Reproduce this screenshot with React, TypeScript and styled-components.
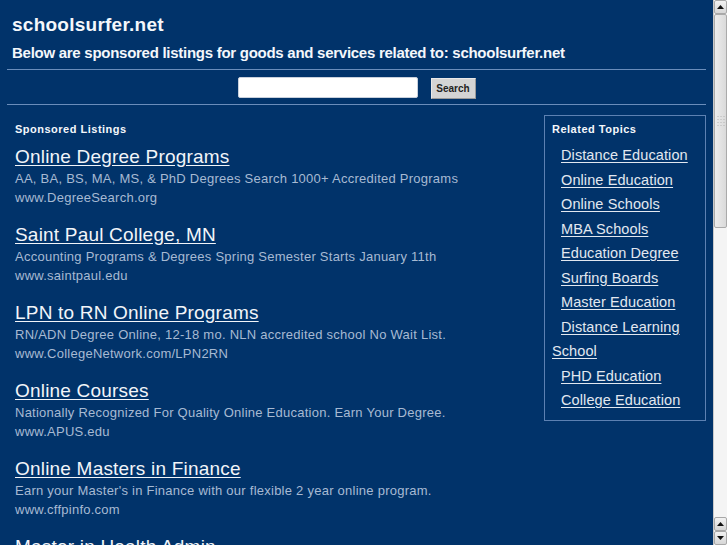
import React from "react";
import styled, { createGlobalStyle } from "styled-components";

const Global = createGlobalStyle`
  html, body { margin: 0; padding: 0; overflow: hidden; background: #003366; }
  body { font-family: "Liberation Sans", Arial, sans-serif; }
`;

const Page = styled.div`
  display: flex;
  width: 727px;
  height: 545px;
  background: #01336a;
`;

const Main = styled.div`
  flex: 1;
  min-width: 0;
  overflow: hidden;
  padding: 0 7px;
  color: #fff;
`;

const Header = styled.div`
  padding: 14px 0 0 5px;
`;

const Title = styled.h1`
  margin: 0;
  font-size: 19px;
  line-height: 22px;
  font-weight: bold;
  color: #f4f7fb;
  letter-spacing: 0.25px;
`;

const Subtitle = styled.h2`
  margin: 8px 0 0;
  font-size: 15px;
  line-height: 18px;
  font-weight: bold;
  color: #f4f7fb;
  letter-spacing: -0.27px;
`;

const Rule = styled.hr<{ $top: number }>`
  margin: ${(p) => p.$top}px 0 0;
  border: 0;
  height: 1px;
  background: #6a8dbb;
`;

const SearchRow = styled.form`
  display: flex;
  justify-content: center;
  align-items: center;
  gap: 13px;
  padding: 7px 0 0 0;
  height: 21px;
`;

const SearchInput = styled.input`
  box-sizing: border-box;
  width: 180px;
  height: 21px;
  border: 1px solid #c8d0dc;
  border-radius: 2px;
  background: #fff;
  padding: 0 4px;
  margin-top: -1px;
`;

const SearchButton = styled.button`
  box-sizing: border-box;
  width: 45px;
  height: 21px;
  border: 1px solid #9a9a9a;
  border-top-color: #e8e8e8;
  border-left-color: #e8e8e8;
  background: #d4d4d4;
  font-family: "Liberation Sans", Arial, sans-serif;
  font-size: 10px;
  font-weight: bold;
  color: #222;
  padding: 0;
  margin-top: 1px;
`;

const Columns = styled.div`
  display: flex;
  align-items: flex-start;
  gap: 11px;
  padding: 10px 0 0 8px;
`;

const Listings = styled.div`
  flex: 1;
  min-width: 0;
`;

const SectionLabel = styled.div<{ $pad?: number }>`
  font-size: 11px;
  line-height: 14px;
  font-weight: bold;
  color: #f4f7fb;
  letter-spacing: 0.5px;
  padding-top: ${(p) => p.$pad ?? 7}px;
`;

const ListingList = styled.div`
  display: flex;
  flex-direction: column;
  gap: 18px;
  margin-top: 10px;
`;

const Listing = styled.div``;

const ListingTitle = styled.a`
  display: block;
  width: max-content;
  font-size: 19px;
  line-height: 22px;
  color: #f2f5f9;
  text-decoration: underline;
  text-underline-offset: 2px;
  letter-spacing: 0.2px;
`;

const ListingDesc = styled.div`
  font-size: 13px;
  line-height: 22px;
  color: #a7bad3;
  white-space: nowrap;
  letter-spacing: 0.25px;
`;

const ListingUrl = styled.div`
  font-size: 13px;
  line-height: 16px;
  color: #a7bad3;
  letter-spacing: 0.25px;
`;

const RelatedBox = styled.div`
  box-sizing: border-box;
  width: 162px;
  border: 1px solid #5d81b2;
  padding: 6px 7px 7px 7px;
`;

const RelatedList = styled.div`
  margin-top: 7px;
`;

const RelatedItem = styled.div`
  font-size: 14.5px;
  line-height: 24.5px;
  letter-spacing: 0.1px;
`;

const RelatedLink = styled.a`
  margin-left: 9px;
  color: #e2e8f0;
  text-decoration: underline;
  text-underline-offset: 2px;
`;

const Scrollbar = styled.div`
  display: flex;
  flex-direction: column;
  width: 14px;
  height: 545px;
  background: #f4f4f4;
  border-left: 1px solid #c9c9c9;
  box-sizing: border-box;
`;

const ArrowButton = styled.div`
  box-sizing: border-box;
  height: 14px;
  flex: none;
  display: flex;
  align-items: center;
  justify-content: center;
  background: linear-gradient(#f2f2f2, #d6d6d6);
  border: 1px solid #a8a8a8;
  border-radius: 2px;
`;

const Thumb = styled.div`
  box-sizing: border-box;
  height: 214px;
  flex: none;
  display: flex;
  align-items: center;
  justify-content: center;
  background: linear-gradient(90deg, #ececec, #dadada);
  border: 1px solid #aaaaaa;
  border-radius: 2px;
`;

const Track = styled.div`
  flex: 1;
`;

const Arrow = ({ down }: { down?: boolean }) => (
  <svg width="7" height="4" viewBox="0 0 7 4">
    <path d={down ? "M0 0H7L3.5 4Z" : "M0 4H7L3.5 0Z"} fill="#111" />
  </svg>
);

const Grip = () => (
  <svg width="8" height="10" viewBox="0 0 8 10">
    {[0, 3, 6, 9].map((y) =>
      [0, 3, 6].map((x) => <rect key={`${x}-${y}`} x={x + 0.5} y={y} width="1" height="1" fill="#b5b5b5" />)
    )}
  </svg>
);

const listings = [
  {
    title: "Online Degree Programs",
    desc: "AA, BA, BS, MA, MS, & PhD Degrees Search 1000+ Accredited Programs",
    url: "www.DegreeSearch.org",
  },
  {
    title: "Saint Paul College, MN",
    desc: "Accounting Programs & Degrees Spring Semester Starts January 11th",
    url: "www.saintpaul.edu",
  },
  {
    title: "LPN to RN Online Programs",
    desc: "RN/ADN Degree Online, 12-18 mo. NLN accredited school No Wait List.",
    url: "www.CollegeNetwork.com/LPN2RN",
  },
  {
    title: "Online Courses",
    desc: "Nationally Recognized For Quality Online Education. Earn Your Degree.",
    url: "www.APUS.edu",
  },
  {
    title: "Online Masters in Finance",
    desc: "Earn your Master's in Finance with our flexible 2 year online program.",
    url: "www.cffpinfo.com",
  },
  {
    title: "Master in Health Admin",
    desc: "Earn your Master's in Health Administration online.",
    url: "www.healthadmin.edu",
  },
];

const topics = [
  "Distance Education",
  "Online Education",
  "Online Schools",
  "MBA Schools",
  "Education Degree",
  "Surfing Boards",
  "Master Education",
  "Distance Learning School",
  "PHD Education",
  "College Education",
];

export default function App() {
  return (
    <>
      <Global />
      <Page>
        <Main>
          <Header>
            <Title>schoolsurfer.net</Title>
            <Subtitle>Below are sponsored listings for goods and services related to: schoolsurfer.net</Subtitle>
          </Header>
          <Rule $top={7} />
          <SearchRow onSubmit={(e) => e.preventDefault()}>
            <SearchInput type="text" />
            <SearchButton type="submit">Search</SearchButton>
          </SearchRow>
          <Rule $top={6} />
          <Columns>
            <Listings>
              <SectionLabel>Sponsored Listings</SectionLabel>
              <ListingList>
                {listings.map((l) => (
                  <Listing key={l.title}>
                    <ListingTitle href="#">{l.title}</ListingTitle>
                    <ListingDesc>{l.desc}</ListingDesc>
                    <ListingUrl>{l.url}</ListingUrl>
                  </Listing>
                ))}
              </ListingList>
            </Listings>
            <RelatedBox>
              <SectionLabel $pad={0}>Related Topics</SectionLabel>
              <RelatedList>
                {topics.map((t) => (
                  <RelatedItem key={t}>
                    <RelatedLink href="#">{t}</RelatedLink>
                  </RelatedItem>
                ))}
              </RelatedList>
            </RelatedBox>
          </Columns>
        </Main>
        <Scrollbar>
          <ArrowButton><Arrow /></ArrowButton>
          <Thumb><Grip /></Thumb>
          <Track />
          <ArrowButton><Arrow /></ArrowButton>
          <ArrowButton><Arrow down /></ArrowButton>
        </Scrollbar>
      </Page>
    </>
  );
}
